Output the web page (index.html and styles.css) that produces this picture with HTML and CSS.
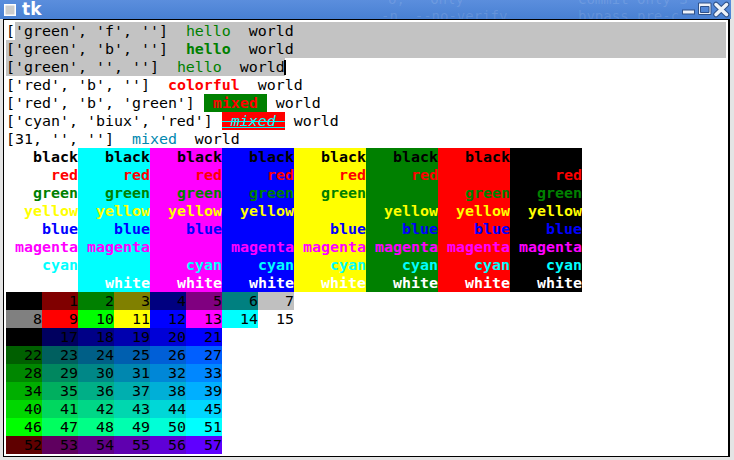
FILE: index.html
```html
<!DOCTYPE html>
<html>
<head>
<meta charset="utf-8">
<title>tk</title>
<link rel="stylesheet" href="styles.css">
</head>
<body>
<div class="screen">
  <div class="titlebar">
    <div class="ghost">
      <span class="gh gh1">o,   Only</span>
      <span class="gh gh2">Commit Only S</span>
      <span class="gh gh3">-n  --no-verify</span>
      <span class="gh gh4">bypass pre-c</span>
    </div>
    <svg class="appicon" viewBox="0 0 12 12" width="12" height="12"><rect x="0.75" y="0.75" width="10.5" height="10.5" fill="#cdcdcd" stroke="#ffffff" stroke-width="1.5"/></svg>
    <span class="title">tk</span>
    <svg class="wmbtns" viewBox="0 0 50 19" width="50" height="19">
      <rect x="2.5" y="10" width="12" height="4" fill="#eef2f8" stroke="#2f5189" stroke-width="1"/>
      <path d="M18.5 3h12.5v11.5h-12.5z M20.5 6.5h8.5v6h-8.5z" fill-rule="evenodd" fill="#eef2f8" stroke="#2f5189" stroke-width="1"/>
      <path d="M36 4.5 L46.5 14.5 M46.5 4.5 L36 14.5" stroke="#2f5189" stroke-width="5.5" stroke-linecap="round" fill="none"/>
      <path d="M36 4.5 L46.5 14.5 M46.5 4.5 L36 14.5" stroke="#eef2f8" stroke-width="3.5" stroke-linecap="round" fill="none"/>
    </svg>
  </div>
  <div class="frame">
    <div class="text">
      <div class="line sel"><span class="unsel">[</span>'green', 'f', '']  <span class="fg">hello</span>  world</div>
      <div class="line sel">['green', 'b', '']  <span class="fg bold">hello</span>  world</div>
      <div class="line"><span class="selspan">['green', '', '']  <span class="fg">hello</span>  world</span><span class="cursor"></span></div>
      <div class="line">['red', 'b', '']  <span class="fr bold">colorful</span>  world</div>
      <div class="line">['red', 'b', 'green'] <span class="bg fr bold"> mixed </span> world</div>
      <div class="line">['cyan', 'biux', 'red'] <span class="br fc ital deco"> mixed </span> world</div>
      <div class="line">[31, '', '']  <span class="f31">mixed</span>  world</div>

      <div class="cblock">
        <div class="crow fk"><span class="bw">black</span><span class="bc">black</span><span class="bm">black</span><span class="bb">black</span><span class="by">black</span><span class="bg">black</span><span class="br">black</span><span class="bk">black</span></div>
        <div class="crow fr"><span class="bw">red</span><span class="bc">red</span><span class="bm">red</span><span class="bb">red</span><span class="by">red</span><span class="bg">red</span><span class="br">red</span><span class="bk">red</span></div>
        <div class="crow fg"><span class="bw">green</span><span class="bc">green</span><span class="bm">green</span><span class="bb">green</span><span class="by">green</span><span class="bg">green</span><span class="br">green</span><span class="bk">green</span></div>
        <div class="crow fy"><span class="bw">yellow</span><span class="bc">yellow</span><span class="bm">yellow</span><span class="bb">yellow</span><span class="by">yellow</span><span class="bg">yellow</span><span class="br">yellow</span><span class="bk">yellow</span></div>
        <div class="crow fb"><span class="bw">blue</span><span class="bc">blue</span><span class="bm">blue</span><span class="bb">blue</span><span class="by">blue</span><span class="bg">blue</span><span class="br">blue</span><span class="bk">blue</span></div>
        <div class="crow fm"><span class="bw">magenta</span><span class="bc">magenta</span><span class="bm">magenta</span><span class="bb">magenta</span><span class="by">magenta</span><span class="bg">magenta</span><span class="br">magenta</span><span class="bk">magenta</span></div>
        <div class="crow fc"><span class="bw">cyan</span><span class="bc">cyan</span><span class="bm">cyan</span><span class="bb">cyan</span><span class="by">cyan</span><span class="bg">cyan</span><span class="br">cyan</span><span class="bk">cyan</span></div>
        <div class="crow fw"><span class="bw">white</span><span class="bc">white</span><span class="bm">white</span><span class="bb">white</span><span class="by">white</span><span class="bg">white</span><span class="br">white</span><span class="bk">white</span></div>
      </div>

      <div class="palette">
        <div class="prow"><span style="background:#000000">0</span><span style="background:#800000">1</span><span style="background:#008000">2</span><span style="background:#808000">3</span><span style="background:#000080">4</span><span style="background:#800080">5</span><span style="background:#008080">6</span><span style="background:#c0c0c0">7</span></div>
        <div class="prow"><span style="background:#808080">8</span><span style="background:#ff0000">9</span><span style="background:#00ff00">10</span><span style="background:#ffff00">11</span><span style="background:#0000ff">12</span><span style="background:#ff00ff">13</span><span style="background:#00ffff">14</span><span style="background:#ffffff">15</span></div>
        <div class="prow"><span style="background:#000000">16</span><span style="background:#00005f">17</span><span style="background:#000087">18</span><span style="background:#0000af">19</span><span style="background:#0000d7">20</span><span style="background:#0000ff">21</span></div>
        <div class="prow"><span style="background:#005f00">22</span><span style="background:#005f5f">23</span><span style="background:#005f87">24</span><span style="background:#005faf">25</span><span style="background:#005fd7">26</span><span style="background:#005fff">27</span></div>
        <div class="prow"><span style="background:#008700">28</span><span style="background:#00875f">29</span><span style="background:#008787">30</span><span style="background:#0087af">31</span><span style="background:#0087d7">32</span><span style="background:#0087ff">33</span></div>
        <div class="prow"><span style="background:#00af00">34</span><span style="background:#00af5f">35</span><span style="background:#00af87">36</span><span style="background:#00afaf">37</span><span style="background:#00afd7">38</span><span style="background:#00afff">39</span></div>
        <div class="prow"><span style="background:#00d700">40</span><span style="background:#00d75f">41</span><span style="background:#00d787">42</span><span style="background:#00d7af">43</span><span style="background:#00d7d7">44</span><span style="background:#00d7ff">45</span></div>
        <div class="prow"><span style="background:#00ff00">46</span><span style="background:#00ff5f">47</span><span style="background:#00ff87">48</span><span style="background:#00ffaf">49</span><span style="background:#00ffd7">50</span><span style="background:#00ffff">51</span></div>
        <div class="prow"><span style="background:#5f0000">52</span><span style="background:#5f005f">53</span><span style="background:#5f0087">54</span><span style="background:#5f00af">55</span><span style="background:#5f00d7">56</span><span style="background:#5f00ff">57</span></div>
      </div>
    </div>
  </div>
</div>
</body>
</html>
```

FILE: styles.css
```css
html, body {
  margin: 0;
  padding: 0;
}
body {
  width: 734px;
  height: 460px;
  overflow: hidden;
  background: #e4e4e4;
  font-family: "DejaVu Sans Mono", monospace;
}
.screen {
  width: 734px;
  height: 460px;
}
.titlebar {
  position: relative;
  width: 731px;
  height: 19px;
  display: flex;
  align-items: center;
  overflow: hidden;
  background: linear-gradient(#5b8edd, #4880d2);
}
.ghost .gh {
  position: absolute;
  font: 14px/16px "DejaVu Sans Mono", monospace;
  color: rgba(255, 255, 255, 0.13);
  white-space: pre;
}
.gh1 { left: 388px; top: -9px; }
.gh2 { left: 578px; top: -9px; }
.gh3 { left: 381px; top: 8px; }
.gh4 { left: 578px; top: 8px; }
.appicon {
  position: relative;
  margin-left: 4px;
  flex: none;
}
.title {
  position: relative;
  margin-left: 6px;
  color: #ffffff;
  font: bold 17px/19px "DejaVu Sans", sans-serif;
}
.wmbtns {
  position: relative;
  margin-left: auto;
  margin-right: 1px;
  flex: none;
}
.frame {
  margin-left: 3px;
  width: 720px;
  height: 432px;
  padding: 2px;
  border: 1px solid #000;
  border-right-width: 2px;
  background: #ffffff;
}
.text {
  font-family: "DejaVu Sans Mono", monospace;
  font-size: 14.95px;
  line-height: 18px;
  color: #000;
}
.line {
  height: 18px;
  white-space: pre;
}
.sel { background: #c3c3c3; }
.unsel { background: #ffffff; }
.selspan { background: #c3c3c3; }
.cursor {
  display: inline-block;
  width: 2px;
  height: 15px;
  margin: 2px 0 0 -1px;
  vertical-align: top;
  background: #000;
}
.bold { font-weight: bold; }
.ital { font-style: italic; }
.deco {
  text-decoration: underline line-through;
  text-decoration-color: #00ffff;
}
.f31 { color: #0087af; }

.fk { color: #000000; }
.fr { color: #ff0000; }
.fg { color: #008000; }
.fy { color: #ffff00; }
.fb { color: #0000ff; }
.fm { color: #ff00ff; }
.fc { color: #00ffff; }
.fw { color: #ffffff; }

.bk { background: #000000; }
.br { background: #ff0000; }
.bg { background: #008000; }
.by { background: #ffff00; }
.bb { background: #0000ff; }
.bm { background: #ff00ff; }
.bc { background: #00ffff; }
.bw { background: #ffffff; }

.crow {
  display: flex;
  height: 18px;
  font-weight: bold;
}
.crow span {
  width: 72px;
  text-align: right;
  white-space: pre;
}
.prow {
  display: flex;
  height: 18px;
  color: #000;
}
.prow span {
  width: 36px;
  text-align: right;
  white-space: pre;
}
```
